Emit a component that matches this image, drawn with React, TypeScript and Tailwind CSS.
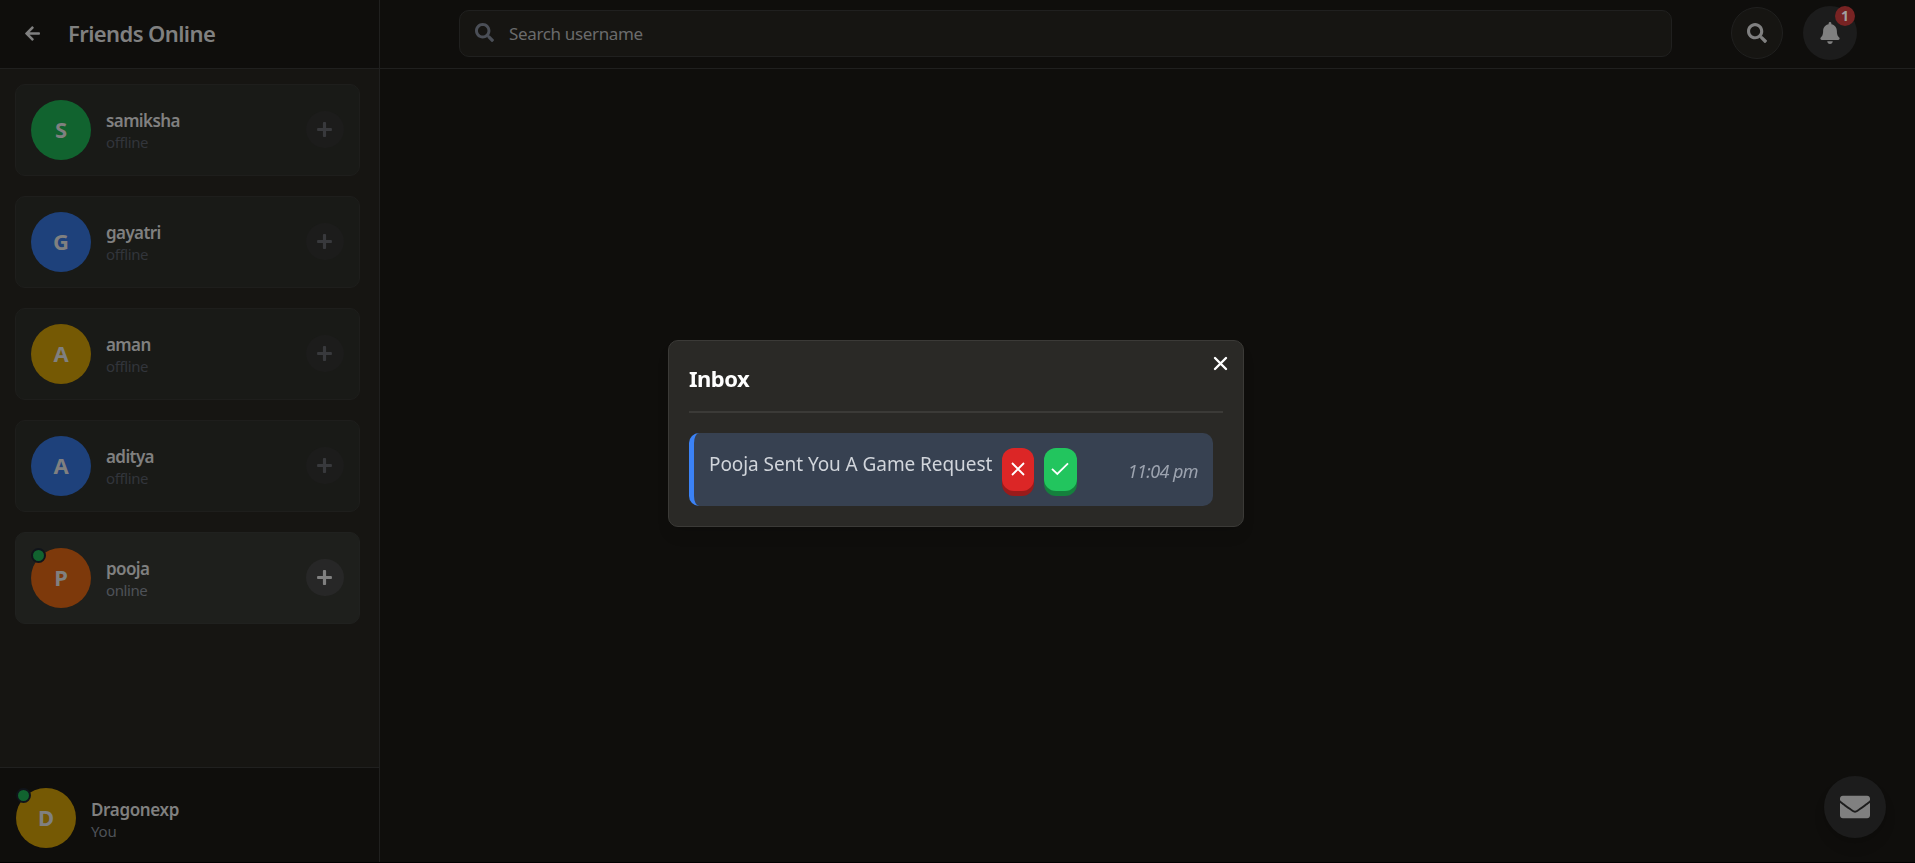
import React from "react";
import { FaArrowLeft, FaBell, FaEnvelope, FaPlus, FaSearch } from "react-icons/fa";

type Friend = { name: string; online: boolean; color: string };

const friends: Friend[] = [
  { name: "samiksha", online: false, color: "bg-[#11632f]" },
  { name: "gayatri", online: false, color: "bg-[#1e417b]" },
  { name: "aman", online: false, color: "bg-[#755904]" },
  { name: "aditya", online: false, color: "bg-[#1e417b]" },
  { name: "pooja", online: true, color: "bg-[#7d390b]" },
];

function Avatar({ letter, color, online }: { letter: string; color: string; online: boolean }) {
  return (
    <div className={`relative flex size-[60px] shrink-0 items-center justify-center rounded-full pb-[3px] ${color}`}>
      <span className="text-[22px] font-bold leading-none text-[#808080]">{letter}</span>
      {online && (
        <span className="absolute left-0 top-0 size-[15px] rounded-full border-2 border-[#10141a] bg-[#11632f]" />
      )}
    </div>
  );
}

function FriendCard({ friend }: { friend: Friend }) {
  return (
    <div
      className={`flex h-[92px] items-center rounded-[10px] border px-[15px] ${
        friend.online ? "border-[#20211f] bg-[#1e1f1c]" : "border-[#1e1e1c] bg-[#191a17]"
      }`}
    >
      <Avatar letter={friend.name[0].toUpperCase()} color={friend.color} online={friend.online} />
      <div className="ml-[15px] flex-1 pt-px">
        <div className="text-[17px] font-semibold leading-[23px] tracking-[-0.6px] text-[#808080]">{friend.name}</div>
        <div className={`text-[15px] leading-5 tracking-[-0.4px] ${friend.online ? "text-[#4e5258]" : "text-[#32353b]"}`}>
          {friend.online ? "online" : "offline"}
        </div>
      </div>
      <button
        className={`mb-px flex h-[37px] w-[38px] items-center justify-center rounded-full pr-px ${
          friend.online ? "bg-[#272727] text-[#808080]" : "bg-[#1c1c1b] text-[#38393c]"
        }`}
      >
        <FaPlus size={17} />
      </button>
    </div>
  );
}

function Inbox() {
  return (
    <div className="fixed inset-0 flex items-center justify-center pr-[3px] pt-1">
      <div className="relative h-[187px] w-[576px] rounded-[10px] border border-[#3b3a37] bg-[#2a2926] px-[20px] pt-[20px] shadow-lg">
        <button className="absolute right-[15px] top-[15px] text-white">
          <svg width="15" height="15" viewBox="0 0 15 15" fill="none" stroke="currentColor" strokeWidth="2.4" strokeLinecap="round">
            <path d="M2 2 13 13M13 2 2 13" />
          </svg>
        </button>
        <h2 className="h-[52px] border-b-2 border-[#3b3a37] text-[22px] font-bold leading-[35px] tracking-[-0.5px] text-white">Inbox</h2>
        <div className="mt-5 flex h-[73px] w-[524px] rounded-[10px] border-l-[5px] border-[#3b82f6] bg-[#374151] px-[15px]">
          <p className="mt-[17px] w-[284px] whitespace-nowrap text-[19px] leading-7 tracking-[-0.07px] text-[#d1d5db]">
            Pooja Sent You A Game Request
          </p>
          <button className="ml-[9px] mt-[15px] flex h-[43px] w-8 items-center justify-center rounded-[12px] bg-[#dc2626] pb-px text-white shadow-[0_5px_0_#991b1b]">
            <svg width="14" height="14" viewBox="0 0 14 14" fill="none" stroke="currentColor" strokeWidth="1.8">
              <path d="M1 1 13 13M13 1 1 13" />
            </svg>
          </button>
          <button className="ml-[10px] mt-[15px] flex h-[43px] w-[33px] items-center justify-center rounded-[12px] bg-[#22c55e] pb-px pr-px text-white shadow-[0_5px_0_#15803d]">
            <svg width="18" height="14" viewBox="0 0 18 14" fill="none" stroke="currentColor" strokeWidth="1.8">
              <path d="M1 6.8 6.3 12 17 1.3" />
            </svg>
          </button>
          <time className="ml-auto mt-6 whitespace-nowrap text-[18px] italic leading-7 tracking-[-0.6px] text-[#9ca3af]">11:04 pm</time>
        </div>
      </div>
    </div>
  );
}

export default function App() {
  return (
    <div className="h-[863px] overflow-hidden bg-black font-['Noto_Sans',sans-serif]">
      <div className="flex h-[862px] bg-[#0f0e0c]">
        <aside className="flex w-[380px] shrink-0 flex-col border-r border-[#20201f] bg-[#161512]">
          <header className="flex h-[69px] items-center border-b border-[#20201f] bg-[#0f0e0c] pb-[2px] pl-6 text-[#808080]">
            <FaArrowLeft size={17} />
            <h1 className="ml-[27px] text-[22px] font-semibold tracking-[-0.6px]">Friends Online</h1>
          </header>
          <div className="flex flex-1 flex-col gap-5 pl-[15px] pr-[19px] pt-[15px]">
            {friends.map((f) => (
              <FriendCard key={f.name} friend={f} />
            ))}
          </div>
          <footer className="flex h-[95px] items-start border-t border-[#20201f] bg-[#0f0e0c] pl-4 pt-5">
            <Avatar letter="D" color="bg-[#755904]" online />
            <div className="ml-[15px] mt-[10px]">
              <div className="text-[17px] font-semibold leading-[23px] tracking-[-0.35px] text-[#808080]">Dragonexp</div>
              <div className="text-[15px] leading-5 tracking-[-0.2px] text-[#4e5258]">You</div>
            </div>
          </footer>
        </aside>
        <main className="flex flex-1 flex-col">
          <header className="flex h-[69px] items-center border-b border-[#20201f] pb-[2px] pl-[79px] text-[#808080]">
            <label className="flex h-[47px] w-[1213px] items-center rounded-[10px] border border-[#20201f] bg-[#161512] pl-[15px]">
              <FaSearch size={19} className="mb-0.5 text-[#4b4f57]" />
              <input
                placeholder="Search username"
                className="ml-[15px] mt-0.5 flex-1 bg-transparent text-[17px] tracking-[-0.35px] outline-none placeholder:text-[#6a6b6c]"
              />
            </label>
            <button className="ml-[59px] flex size-[52px] items-center justify-center rounded-full border border-[#20201f] bg-[#161512]">
              <FaSearch size={20} />
            </button>
            <button className="relative ml-5 flex size-[54px] items-center justify-center rounded-full bg-[#1c1c1c]">
              <FaBell size={22} />
              <span className="absolute right-0.5 top-0 flex size-5 items-center justify-center rounded-full bg-[#782323] text-[14px] font-bold leading-none text-[#a0a0a0]">
                1
              </span>
            </button>
          </header>
          <div className="flex flex-1 items-end justify-end pb-6 pr-[29px]">
            <button className="flex size-[62px] items-center justify-center rounded-full bg-[#1c1c1c] text-[#808080] shadow-lg">
              <FaEnvelope size={30} />
            </button>
          </div>
        </main>
      </div>
      <Inbox />
    </div>
  );
}
